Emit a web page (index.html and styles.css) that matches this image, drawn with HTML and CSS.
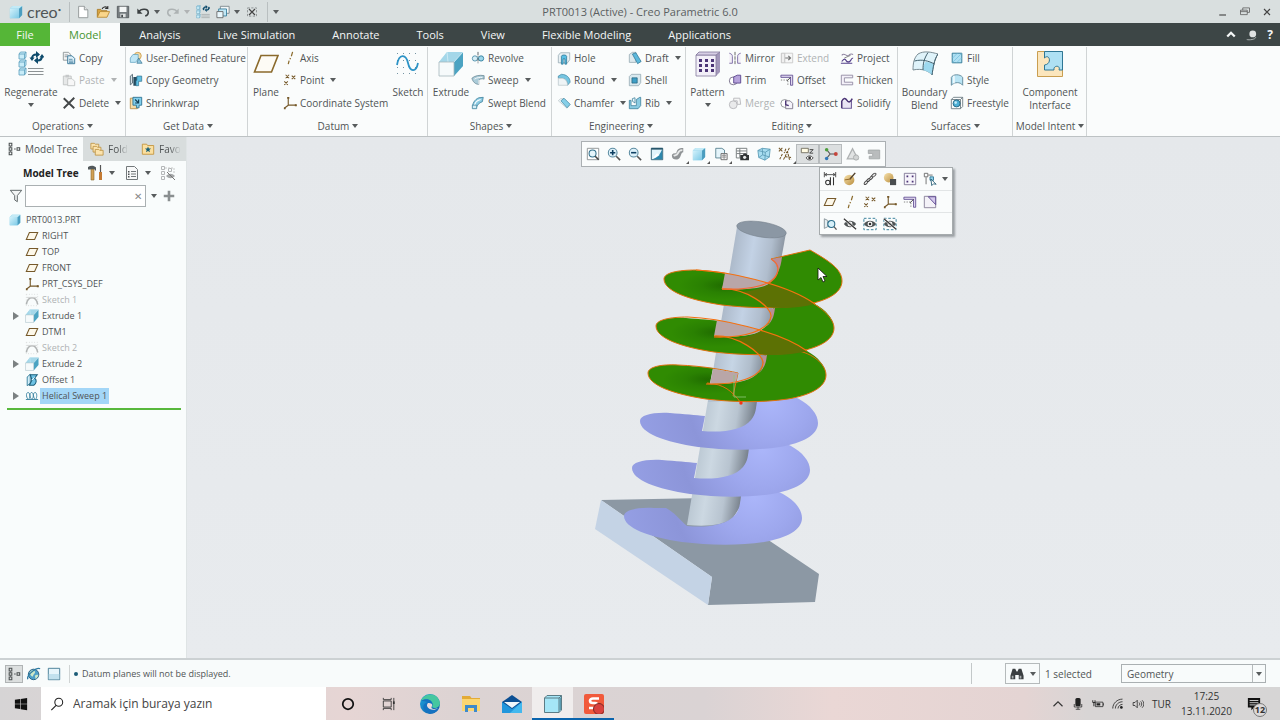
FILE: index.html
```
<!DOCTYPE html>
<html lang="en">
<head>
    <meta charset="UTF-8">
    <meta name="viewport" content="width=device-width, initial-scale=1.0">
    <title>PRT0013 (Active) - Creo Parametric 6.0</title>
    <link rel="stylesheet" href="styles.css">
</head>
<body>
    <!-- Icon sprite -->
    <svg class="sprite" aria-hidden="true">
        <defs>
            <linearGradient id="g-cube" x1="0" y1="0" x2="1" y2="1"><stop offset="0" stop-color="#d4f2fb"/><stop offset="1" stop-color="#7cc9e6"/></linearGradient>
            <linearGradient id="g-edge" x1="0" y1="0" x2="1" y2="1"><stop offset="0" stop-color="#1fa5e0"/><stop offset="1" stop-color="#0c59a4"/></linearGradient>
            <linearGradient id="g-gold" x1="0" y1="0" x2="1" y2="1"><stop offset="0" stop-color="#f8e3ae"/><stop offset="1" stop-color="#b98e3f"/></linearGradient>
        </defs>
        <symbol id="cube" viewBox="0 0 16 16"><path d="M1 4 4 1h11v10.500L11.500 15H1z" fill="#7fcbe8"/><path d="M1 4h10.500v11H1z" fill="url(#g-cube)"/><path d="M11.500 4 15 1v10.500L11.500 15z" fill="#4b9dbf"/><path d="M1 4 4 1h11l-3.500 3z" fill="#c3eaf6"/></symbol>
        <symbol id="cube-app" viewBox="0 0 20 20"><path d="M1.500 4 4 1.500h14.500V16L16 18.500H1.500z" fill="#a5e6f7" stroke="#5b7c86"/><path d="M1.500 4H16v14.500M16 4l2.500-2.500" fill="none" stroke="#5b7c86"/><path d="M16.500 4.500 18 3v12.500l-1.500 1.500z" fill="#5b9bb0"/></symbol>
        <symbol id="new" viewBox="0 0 16 16"><path d="M3 1.500h6.500l4 4v9H3z" fill="#fff" stroke="#8d9294"/><path d="M9.500 1.500v4h4" fill="#e3e6e6" stroke="#8d9294"/></symbol>
        <symbol id="open" viewBox="0 0 16 16"><path d="M1.500 14V5h4l1 1.500h6V8" fill="#d9a441" stroke="#a97a26"/><path d="m1.500 14 3-6.500h11L12.500 14z" fill="#f9d58a" stroke="#b98a34"/><path d="M7 4.500C8 2 11 1.500 13 3m.5-2v3h-3" fill="none" stroke="#333" stroke-width="1.200"/></symbol>
        <symbol id="save" viewBox="0 0 16 16"><path d="M1.500 1.500h13v13h-13z" fill="#777d80" stroke="#54595b"/><path d="M4 2h8v6H4z" fill="#f4f6f6"/><path d="M5 10h6v4H5z" fill="#dfe2e2"/><path d="M6 11h2v3H6z" fill="#454a4c"/></symbol>
        <symbol id="undo" viewBox="0 0 16 16"><path d="M3 8C6 3.500 14 4 14 8.500c0 2-1.500 3.500-3.500 4" fill="none" stroke="currentColor" stroke-width="1.800"/><path d="M1.500 4v6h6z" fill="currentColor"/></symbol>
        <symbol id="redo" viewBox="0 0 16 16"><path d="M13 8C10 3.500 2 4 2 8.500c0 2 1.500 3.500 3.500 4" fill="none" stroke="currentColor" stroke-width="1.800"/><path d="M14.500 4v6h-6z" fill="currentColor"/></symbol>
        <symbol id="regen" viewBox="0 0 26 26"><g fill="#c8ecf8" stroke="#5b9fbd" stroke-width=".8"><path d="M1 3 2.500 1H8v5L6.500 8H1zM1 11l1.500-2H8v5l-1.500 2H1zM1 19l1.500-2H8v5l-1.500 2H1z"/><path d="M1 3h5.500v5M1 11h5.500v5M1 19h5.500v5M6.500 3 8 1M6.500 11 8 9M6.500 19 8 17" fill="none"/></g><path d="M10 17.500h15.500M10 20.500h15.500M10 23.500h15.500" stroke="#8c9294"/><path d="M14 8c0-3 1-4.500 4.500-4.500M24 5c0 3-1 4.500-4.500 4.500" fill="none" stroke="#0e4b6c" stroke-width="2.200"/><path d="m18 0 4 3.500L18 7zM20 6l-4 3.500 4 3.500zM11.500 6.500h5L14 10zM21.500 6.500 24 3l2.500 3.500z" fill="#0e4b6c"/></symbol>
        <symbol id="windows" viewBox="0 0 16 16"><path d="M5 1.500h10v8H5z" fill="#f4f7f7" stroke="#7a868b"/><path d="M3 4.500h9v8H3z" fill="#c0e7f5" stroke="#377f9d"/><path d="M1 7.500h7v7H1z" fill="#e9f7fc" stroke="#666"/></symbol>
        <symbol id="closewin" viewBox="0 0 16 16"><path d="M2 2.500h12v11H2z" fill="none" stroke="#7a7f80" stroke-dasharray="3 2"/><path d="m4 4 8 8m0-8-8 8" stroke="#444" stroke-width="1.600"/></symbol>
        <symbol id="copy" viewBox="0 0 16 16"><path d="M1.500 1.500h6l2 2v7h-8z" fill="#f2f4f5" stroke="#8b9396"/><path d="M3 4.500h4M3 6.500h3" stroke="#8b9396"/><path d="M6.500 5.500h5l3 3v6h-8z" fill="#dff1fa" stroke="#2d6f91"/><path d="M8 9.500h4M8 11.500h5M8 13h5" stroke="#2d6f91" stroke-width=".8"/></symbol>
        <symbol id="paste" viewBox="0 0 16 16"><path d="M1.500 3.500h9v10h-9z" fill="#e2e4e4" stroke="#b0b3b4"/><path d="M4 2h4v3H4z" fill="#b9bcbd"/><path d="M6.500 6.500h5l3 3v5h-8z" fill="#f7f7f7" stroke="#b0b3b4"/></symbol>
        <symbol id="delete" viewBox="0 0 16 16"><path d="m2 2.500 12 11.500M14 2 2 14" fill="none" stroke="#434748" stroke-width="2.200"/></symbol>
        <symbol id="udf" viewBox="0 0 16 16"><circle cx="10" cy="5.500" r="4" fill="#f6dca6" stroke="#c99d4b"/><path d="M4.500 4 1.500 8v5h6l3-4V4z" fill="#bfe6f5" stroke="#5b9fbd" stroke-width=".8"/><path d="m9 14 2-6 4 6z" fill="#8ec6de" stroke="#3b7895" stroke-width=".8"/></symbol>
        <symbol id="copygeo" viewBox="0 0 16 16"><path d="M1.500 3.500 4 1.500v10l-2.500 2z" fill="#d5e2e8" stroke="#51646e"/><path d="M5 4.500h6v5H8v5H5z" fill="#264b5e"/><path d="M9 3.500h5.500v6H11v5H8v-6h1z" fill="#5fc0e3" stroke="#30718e" stroke-width=".8"/></symbol>
        <symbol id="shrink" viewBox="0 0 16 16"><path d="M1.500 2.500h8v12h-8z" fill="#f4dca9" stroke="#b99048"/><path d="M4.500 1.500h10v9h-3v3h-3v-3h-4z" fill="#82cfec" stroke="#2c7191"/><path d="m7 4 4 4m0-4v4H7" fill="none" stroke="#123f56" stroke-width="1.300"/></symbol>
        <symbol id="plane" viewBox="0 0 26 26"><path d="M8 4.500h17L18.500 21H1.500z" fill="#fdfbf5" stroke="#8a6a2c" stroke-width="1.600"/></symbol>
        <symbol id="plane-s" viewBox="0 0 16 16"><path d="M5 4h9.500L11 12H1.500z" fill="#fdf8ea" stroke="#76592a" stroke-width="1.200"/></symbol>
        <symbol id="axis" viewBox="0 0 16 16"><path d="M11 1 9.500 6M8.500 8 8 9.500M7 11l-1 4" stroke="#8a6a2c" stroke-width="1.400"/></symbol>
        <symbol id="point" viewBox="0 0 16 16"><path d="m3 2 4 4m0-4L3 6m7-3 4 4m0-4-4 4M1.500 9.500l4 4m0-4-4 4" stroke="#76592a" stroke-width="1.200"/></symbol>
        <symbol id="csys" viewBox="0 0 16 16"><path d="M6 1.500v9h9M6 10.500 1.500 14" fill="none" stroke="#76592a" stroke-width="1.300"/><path d="M4.800 1h2.400v2H4.800zM13.500 9.400H15.800v2.200h-2.300zM1 13h2v2H1z" fill="#76592a"/></symbol>
        <symbol id="sketch" viewBox="0 0 26 26"><path d="M2 2.500h24M2 9.500h24M2 16.500h24M2 22.500h24" stroke="#7594a3" stroke-dasharray="1 5"/><path d="M2 14C4 2 11 3 13 12s8 10 10 0" fill="none" stroke="#2c93c6" stroke-width="1.800"/></symbol>
        <symbol id="extrude" viewBox="0 0 26 26"><path d="M1 11 9 1h16v14l-9 10H1z" fill="#c9e9f4"/><path d="M9 1h16l-9 10H1z" fill="#a4d7e9"/><path d="M25 1v14l-9 10V11z" fill="#4ba3c2"/><path d="m9 1 1 10M10 15h6M16 11l9-10" stroke="#d6eef6" stroke-width=".8"/><path d="M1 11h15v14H1z" fill="#f6fafb" stroke="#a5b6bd" stroke-width=".8"/></symbol>
        <symbol id="revolve" viewBox="0 0 16 16"><circle cx="4.500" cy="8.500" r="3" fill="#d7eef6" stroke="#4c8ea9"/><circle cx="11.500" cy="8.500" r="3" fill="#9dd6ea" stroke="#2f7d9c"/><path d="M8 1v14" stroke="#4a565b" stroke-dasharray="4 1 1 1"/></symbol>
        <symbol id="sweep" viewBox="0 0 16 16"><path d="M1 6c3-3 9-4 14-3v4c-3-1-5 0-6 1v5C5 13 2 10 1 6z" fill="#aacbd8" stroke="#61808d" stroke-width=".8"/><path d="M4 7c3-2 6-2 9-2M9 8v5" fill="none" stroke="#fff"/></symbol>
        <symbol id="swept" viewBox="0 0 16 16"><path d="M2 14C1 9 4 4 9 2l5-.500-1 5C9 8 7 10 6 14z" fill="#8ccbe2" stroke="#3c7f9a" stroke-width=".9"/><path d="M4 12c0-4 3-7 7-8" fill="none" stroke="#fff" stroke-width="1.200"/><path d="M1.500 10.500h5v4h-5z" fill="#d5eef7" stroke="#3c7f9a" stroke-width=".8"/></symbol>
        <symbol id="hole" viewBox="0 0 16 16"><path d="M1.500 5 4 2h10.500v8L12 13.500H1.500z" fill="#e9f1f4" stroke="#8ba0aa" stroke-width=".8"/><path d="M5 6c0-2 6-2 6 0v9H9V9H7v6H5z" fill="#58bfe4" stroke="#256d8c" stroke-width=".8"/></symbol>
        <symbol id="round" viewBox="0 0 16 16"><path d="M1.500 3.500 5 1.500c6 0 10 4 10 9L12 14c0-5-3-8-7-8H1.500z" fill="#76c5e1" stroke="#3f87a4" stroke-width=".8"/><path d="M1.500 6H5c4 0 7 3 7 8H1.500z" fill="#eef4f6" stroke="#b8c4c9" stroke-width=".8"/></symbol>
        <symbol id="chamfer" viewBox="0 0 16 16"><path d="M1.500 5.500 4 3h4l7 7-3.500 4z" fill="#eef4f6" stroke="#b8c4c9" stroke-width=".8"/><path d="m4.500 5.500 3.500-3 7 7-3.500 4z" fill="#86cfe8" stroke="#3f87a4" stroke-width=".8"/></symbol>
        <symbol id="draft" viewBox="0 0 16 16"><path d="M1.500 4 5 1.500h4V13H1.500z" fill="#dce9ee" stroke="#8ba0aa" stroke-width=".8"/><path d="M5 3.500 9 2l6 10-4 2.500z" fill="#5bb8dc" stroke="#2a708f" stroke-width=".8"/></symbol>
        <symbol id="shell" viewBox="0 0 16 16"><path d="M1.500 4 4 1.500h10.500V11L12 14.500H1.500z" fill="#d9e9ef" stroke="#8ba0aa" stroke-width=".8"/><path d="M4.500 5.500h6v6h-6z" fill="#3f9fc6" stroke="#22607a" stroke-width=".8"/></symbol>
        <symbol id="rib" viewBox="0 0 16 16"><path d="M1.500 5h2v6h6V4l4-2.500h1V11l-3 3.500h-10z" fill="#8acbe2" stroke="#2f7592" stroke-width=".8"/><path d="M5 6V3l3-1v6z" fill="#e8f6fb" stroke="#2f7592" stroke-width=".8"/></symbol>
        <symbol id="pattern" viewBox="0 0 26 26"><path d="M1 4 4 1h21v20l-4 4H1z" fill="#a297ba"/><path d="M1 4h20v21H1z" fill="#f2eff8" stroke="#83789c" stroke-width=".8"/><path d="M1 4 4 1h21l-4 3z" fill="#d6cee4" stroke="#83789c" stroke-width=".8"/><path d="M4 8h3v3H4zM10 8h3v3h-3zM16 8h3v3h-3zM4 13h3v3H4zM10 13h3v3h-3zM16 13h3v3h-3zM4 18h3v3H4zM10 18h3v3h-3zM16 18h3v3h-3z" fill="#4c3577"/></symbol>
        <symbol id="mirror" viewBox="0 0 16 16"><path d="M1.500 2.500c3 1 3.500 2 3.500 4V14H1.500M14.500 2.500C11.500 3.500 11 4.500 11 6.500V14h3.500" fill="#f3f0f8" stroke="#7463a0"/><path d="M8 1v14" stroke="#555" stroke-dasharray="4 1"/></symbol>
        <symbol id="trim" viewBox="0 0 16 16"><circle cx="6" cy="9" r="4.500" fill="#fff" stroke="#746b86"/><path d="M6.500 4.500v7h8v-9h-4z" fill="#b6a3db" stroke="#56418a"/></symbol>
        <symbol id="merge" viewBox="0 0 16 16"><circle cx="6" cy="10" r="4.500" fill="#e6e6e8" stroke="#a3a3a8"/><path d="M6.500 2.500h7l1 7h-4v-4h-4z" fill="#f5f5f5" stroke="#a3a3a8"/></symbol>
        <symbol id="extend" viewBox="0 0 16 16"><path d="M1.500 2.500h4v11h-4z" fill="#ededed" stroke="#b0b0b0"/><path d="M5.500 2.500h9v11h-9z" fill="#f6f6f6" stroke="#bbb"/><path d="M6 8h6M9.500 5.500 12 8l-2.500 2.500" fill="none" stroke="#555" stroke-width="1.400"/></symbol>
        <symbol id="offset" viewBox="0 0 16 16"><path d="M1 2.500h13.500V14H12V5H1z" fill="#e0d8f0" stroke="#56418a" stroke-width=".9"/><path d="M1 8h8v7" fill="none" stroke="#777" stroke-dasharray="1.500 1.500"/><path d="m8 9 4-4" stroke="#333"/></symbol>
        <symbol id="intersect" viewBox="0 0 16 16"><circle cx="5.500" cy="8.500" r="4.500" fill="#fff" stroke="#8b8f92"/><path d="M6.500 5.500h5l3 3v6h-8z" fill="#f5f3fa" stroke="#7b7687"/><path d="M6.500 5v5l3.500 1" fill="none" stroke="#4c3577" stroke-width="1.500"/></symbol>
        <symbol id="project" viewBox="0 0 16 16"><path d="M2 5c3-4 5 2 8 0 2-2 3-2 5-1" fill="none" stroke="#9187a3" stroke-width="1.200"/><path d="M2 12c3-4 4-3 5-1s4 2 5 0 2-3 3-3M1 14h13" fill="none" stroke="#56418a" stroke-width="1.300"/><path d="M12 5 5 8" stroke="#777"/></symbol>
        <symbol id="thicken" viewBox="0 0 16 16"><path d="M14.500 2.500h-13v11h13v-3H5v-5h9.500z" fill="#f4f1f9" stroke="#8f87a0"/></symbol>
        <symbol id="solidify" viewBox="0 0 16 16"><path d="M3 7c2-3 4-2 5 0s3 1 4 0v6H3z" fill="#e9e3f4"/><path d="M2 14h11V5" fill="none" stroke="#6e5b99" stroke-width="1.300"/><path d="M2 14V6c2-4 4-4 6-1s4 2 6-2" fill="none" stroke="#4c3577" stroke-width="1.800"/></symbol>
        <symbol id="boundary" viewBox="0 0 26 26"><path d="M6 3C12-.500 19 1 26 3c-4 6-5 14-6 21-3-4-10-7-19-5C1 12 2 7 6 3z" fill="#dff3fa" stroke="#7a8c94"/><path d="M13.500 11C18 11 20 12 22 13.500L20 24c-3-3-6-4-9-5 0-3 1-6 2.500-8z" fill="#9dd9ef"/><path d="M16 1.500C12 8 11 12 11 19M2.500 10c8-2 14 0 20 3M26 3c-4 6-5 14-6 21" fill="none" stroke="#44626f"/></symbol>
        <symbol id="fill" viewBox="0 0 16 16"><path d="M2.500 2.500h11v11h-11z" fill="#afe0f3" stroke="#26708f"/><path d="m3 8 5-5M3 13 13 3m-5 10 5-5" stroke="#7ec5e0"/></symbol>
        <symbol id="style" viewBox="0 0 16 16"><path d="M1.500 14V5c2-4 10-4 13 0v9c-3-4-9-4-13 0z" fill="#b9e4f4" stroke="#5b8496"/><path d="M4.500 12V3" stroke="#fff" stroke-width="1.500"/></symbol>
        <symbol id="freestyle" viewBox="0 0 16 16"><path d="M1.500 4 4 1.500h10.500V12L12 14.500H1.500zM1.500 4H12v10.500M12 4l2.500-2.500" fill="none" stroke="#6b7a81"/><circle cx="7.500" cy="8.500" r="4" fill="#4fb0d6" stroke="#1e627f"/><circle cx="6.500" cy="7.500" r="1.500" fill="#c4ecf9"/></symbol>
        <symbol id="component" viewBox="0 0 26 26"><path d="M.5.500h25v25H.5z" fill="#fbe6bd" stroke="#c99e50"/><path d="M7.500.500h18V19H22c2-5-6-5-5 0H7.500v-5c8-1 5-12 0-7z" fill="#aee0f3" stroke="#2f7795"/></symbol>
        <symbol id="tree" viewBox="0 0 16 16"><path d="M2.500 1.500h3v3h-3zM2.500 6.500h3v3h-3zM2.500 11.500h3v3h-3zM11.500 6.500h3v3h-3z" fill="none" stroke="#4a4f50" stroke-width="1.200"/><path d="M8 8h2M4 5v1M4 10v1" stroke="#4a4f50"/></symbol>
        <symbol id="folders" viewBox="0 0 16 16"><g fill="#fbe3ae" stroke="#b88d3c" stroke-width=".9"><path d="M1 1.500h4l1 1h4V8H1z"/><path d="M3.500 5h4l1 1h4v5.500h-9z"/><path d="M6 8.500h4l1 1h4V15H6z"/></g></symbol>
        <symbol id="fav" viewBox="0 0 16 16"><path d="M1.500 2.500h5l1 1.500h7v10h-13z" fill="#fbdf9f" stroke="#c2953e"/><path d="m8 5 1 2.500h2.500l-2 1.700.8 2.500L8 10.200l-2.300 1.500.8-2.500-2-1.700H7z" fill="#155f77"/></symbol>
        <symbol id="tools" viewBox="0 0 16 16"><path d="M0 2c3-2 6-1.500 8 .500v3H7V4.500H0z" fill="#51585b"/><path d="M3 4.500h3V15H3z" fill="#d1a054" stroke="#8a6a2c" stroke-width=".6"/><path d="M12.500 0v8" stroke="#555" stroke-width="1.200"/><path d="M11 7h3v8h-3z" fill="#c47b34"/></symbol>
        <symbol id="list" viewBox="0 0 16 16"><path d="M2.500 1.500h8l3 3v10h-11z" fill="#f8f9f9" stroke="#73797b"/><path d="M7 6.500h5M7 9h5M7 11.500h5" stroke="#73797b"/><path d="M4 6h1.500v1.500H4zM4 8.500h1.500V10H4zM4 11h1.500v1.500H4z" fill="#4b5153"/></symbol>
        <symbol id="treehide" viewBox="0 0 16 16"><path d="M1.500 1.500h3v3h-3zM1.500 6.500h3v3h-3zM1.500 11.500h3v3h-3zM8.500 3.500h3v3h-3z" fill="none" stroke="#b4b7b8"/><path d="M5 3h9v5" fill="none" stroke="#c6c8c8" stroke-dasharray="2 1"/><path d="M6 11c3-3 6-3 9 0-3 3-6 3-9 0z" fill="#a4a7a8"/><path d="m7 7 8 8" stroke="#777"/></symbol>
        <symbol id="funnel" viewBox="0 0 16 16"><path d="M1.500 1.500h13l-5 6v7l-3-2v-5z" fill="#f4f6f6" stroke="#5e6566" stroke-width="1.100"/></symbol>
        <symbol id="plus" viewBox="0 0 16 16"><path d="M6.500 2h3v4.500H14v3H9.500V14h-3V9.500H2v-3h4.500z" fill="#8a8f90"/></symbol>
        <symbol id="sketch-off" viewBox="0 0 16 16"><path d="M1.500 1.500h13v13h-13z" fill="none" stroke="#cdcfcf" stroke-dasharray="1 2"/><path d="M1.500 13c1-5 3.500-7.500 6.500-7.500s5.500 2.500 6.500 7.500" fill="none" stroke="#9fa2a2" stroke-width="1.800"/><path d="M2 5h12" stroke="#c3c5c5"/></symbol>
        <symbol id="offset-s" viewBox="0 0 16 16"><path d="M2.500 4.500 6 1.500v10l-3.500 3z" fill="#d4eef8" stroke="#2d7897"/><path d="M6 2h8l-3 4c3 2 2 6-1 8H5l3-6z" fill="#6fc3e4" stroke="#1c5f7b" stroke-width="1.200"/><path d="m8 8 3-3" stroke="#fff"/></symbol>
        <symbol id="helix" viewBox="0 0 16 16"><path d="M1 12h3C1 10 1 4 3.500 4S6 10 4 12h4C5 10 5 4 7.500 4S10 10 8 12h4C9 10 9 4 11.500 4S14 10 12 12h3" fill="none" stroke="#317d9c"/></symbol>
        <symbol id="zoomfit" viewBox="0 0 16 16"><path d="M1.500 1.500h13v13h-13z" fill="#fff" stroke="#888e90"/><circle cx="7.500" cy="7.500" r="4" fill="#e5f5fb" stroke="#33718c" stroke-width="1.200"/><path d="m10.500 10.500 4 4" stroke="#444" stroke-width="1.800"/></symbol>
        <symbol id="zoomin" viewBox="0 0 16 16"><circle cx="6.500" cy="6.500" r="5" fill="#ddf1fa" stroke="#5b8ba1" stroke-width="1.200"/><path d="M6.500 3.500v6m-3-3h6" stroke="#0d3f63" stroke-width="1.800"/><path d="m10.500 10.500 4.500 4.500" stroke="#555" stroke-width="1.800"/></symbol>
        <symbol id="zoomout" viewBox="0 0 16 16"><circle cx="6.500" cy="6.500" r="5" fill="#ddf1fa" stroke="#5b8ba1" stroke-width="1.200"/><path d="M3.500 6.500h6" stroke="#0d3f63" stroke-width="1.800"/><path d="m10.500 10.500 4.500 4.500" stroke="#555" stroke-width="1.800"/></symbol>
        <symbol id="repaint" viewBox="0 0 16 16"><path d="M1.500 1.500h13v13h-13z" fill="#e1f4fb" stroke="#27566b"/><path d="M14 2v12H2C8 13 12 8 14 2z" fill="#2d87ac"/><path d="m2 14 6-7 3 2z" fill="#fff"/><path d="M1.500 2h13" stroke="#27566b" stroke-width="2"/></symbol>
        <symbol id="render" viewBox="0 0 16 16"><path d="M1 10c0-3 3-3 5-3 1-4 2-6 8-6v5c-3 0-2 6-6 8-3 1-7 0-7-4z" fill="#909496"/><path d="M3 10c2-1 4 0 5-3s2-3.500 5-3.500" fill="none" stroke="#e8eaea" stroke-width="2"/></symbol>
        <symbol id="view" viewBox="0 0 16 16"><path d="M2 1.500h7l3 2v9H2z" fill="#e5f5fb" stroke="#56808f"/><path d="M8 7.500h7v7H8z" fill="#f6f6f6" stroke="#666"/><path d="M9 9.500h5M9 11.500h5M11.500 8v6" stroke="#888"/></symbol>
        <symbol id="camera" viewBox="0 0 16 16"><path d="M1.500 1.500h12v11h-12zM2 4.500h11M2 7.500h11M5.500 2v10" fill="#fff" stroke="#6c7274"/><path d="M6 9h3l1-1.500h3L14 9h2v6H6z" fill="#303435"/><circle cx="11" cy="11.800" r="1.800" fill="#e7eaea"/></symbol>
        <symbol id="persp" viewBox="0 0 16 16"><path d="m1 4 5-2.500 9 1-1 9-5 3.500-7-3z" fill="#a9def1" stroke="#5c9cb6"/><path d="m1 4 8.500 2L15 2.500M9.500 6 9 15M6 1.500 6.500 9 2 12m4.500-3 8 2.500" fill="none" stroke="#5c9cb6"/></symbol>
        <symbol id="datum" viewBox="0 0 16 16"><path d="m1 1 4 4m0-4L1 5" stroke="#76592a" stroke-width="1.200"/><path d="M13 1 6 15M5 8l-3 6M9 6h2l2 8h2M8 11l7 1M9 2l-2 5" stroke="#76592a" stroke-width="1.200" fill="none" stroke-dasharray="3 1"/></symbol>
        <symbol id="annot" viewBox="0 0 16 16"><path d="M1.500 1.500h8v5h-8z" fill="#fffbe4" stroke="#6e6b5c"/><path d="M11 3h4l-4 4h4" fill="none" stroke="#333"/><path d="M7 12.500c2-3 6-3 8 0-2 3-6 3-8 0z" fill="#fff" stroke="#333"/><circle cx="11" cy="12.500" r="1.600" fill="#333"/></symbol>
        <symbol id="spin" viewBox="0 0 16 16"><path d="M3 3l4 5-4 5m4-5h6" fill="none" stroke="#555" stroke-width="1.200"/><circle cx="3" cy="3" r="2" fill="#4c9e3c"/><circle cx="3" cy="13" r="2" fill="#3277b8"/><circle cx="13.500" cy="8" r="2.200" fill="#c5453b"/></symbol>
        <symbol id="warn" viewBox="0 0 16 16"><path d="m7.500 2 6 11.500h-12z" fill="#e1e3e3" stroke="#aeb1b2" stroke-width="1.500"/><circle cx="11.500" cy="12" r="3" fill="#d2d4d4" stroke="#a8abab"/></symbol>
        <symbol id="exit" viewBox="0 0 16 16"><path d="M1.500 3.500h13v10h-12v-3h4v-3h-5z" fill="#b9bcbd" stroke="#a4a8a9"/></symbol>
        <symbol id="dim" viewBox="0 0 16 16"><path d="M1.500 0v6M14.500 0v6M2 3h12M4.500 1.500 2 3l2.500 1.500M11.500 1.500 14 3l-2.500 1.500" fill="none" stroke="#444"/><path d="M8.500 6v9M12 6v9" stroke="#333" stroke-width="1.200"/><circle cx="5.500" cy="12" r="2.500" fill="none" stroke="#333" stroke-width="1.200"/></symbol>
        <symbol id="paint" viewBox="0 0 16 16"><circle cx="7" cy="9" r="6" fill="url(#g-gold)"/><path d="m14 1-6 7" fill="none" stroke="#51412b" stroke-width="1.600"/><path d="m2 9 7-1" stroke="#8a5f22"/></symbol>
        <symbol id="chain" viewBox="0 0 16 16"><g fill="#eee" stroke="#444" stroke-width="1.100"><ellipse cx="3.500" cy="12" rx="2.800" ry="1.400" transform="rotate(-50 3.500 12)"/><ellipse cx="6.500" cy="9" rx="2.500" ry="1.200" transform="rotate(-35 6.500 9)"/><ellipse cx="9.500" cy="6.500" rx="2.500" ry="1.200" transform="rotate(-50 9.500 6.500)"/><ellipse cx="12.500" cy="3.500" rx="2.800" ry="1.400" transform="rotate(-40 12.500 3.500)"/></g></symbol>
        <symbol id="mat" viewBox="0 0 16 16"><circle cx="6.500" cy="6.500" r="5.500" fill="url(#g-gold)"/><path d="M8 8h7v7H8z" fill="#4a4e50"/></symbol>
        <symbol id="pattern-s" viewBox="0 0 16 16"><path d="M1.500 1.500h13v13h-13z" fill="#f6f4fb" stroke="#7e7593"/><path d="M4 4h2v2H4zM10 4h2v2h-2zM4 10h2v2H4zM10 10h2v2h-2z" fill="#4c3577"/></symbol>
        <symbol id="select" viewBox="0 0 16 16"><path d="M1.500 1.500h4v4h-4zM3.500 6v8M6 3.500h5" fill="none" stroke="#666"/><path d="M8 5.500h4v4H8z" fill="#8fd0ea" stroke="#2f7592"/><path d="m9 8 6 6-3-.500-2 2z" fill="#fff" stroke="#245b74"/></symbol>
        <symbol id="trim-s" viewBox="0 0 16 16"><path d="M1.500 1.500h13v13h-13z" fill="#f4f2f8" stroke="#837b95"/><path d="M6 2h8.500v9z" fill="#d4c8ec" stroke="#56418a"/></symbol>
        <symbol id="selzoom" viewBox="0 0 16 16"><path d="M1.500 2v11l4-2V4z" fill="#e5eef1" stroke="#839096"/><circle cx="9.500" cy="8" r="4" fill="#d7f0f9" stroke="#2c6f8d" stroke-width="1.200"/><path d="m12.500 11 3 3.500" stroke="#555" stroke-width="1.500"/></symbol>
        <symbol id="eye" viewBox="0 0 16 16"><path d="M1 8c4-5 10-5 14 0-4 5-10 5-14 0z" fill="#4f5455"/><circle cx="8" cy="8" r="2.800" fill="#fff"/><circle cx="8" cy="8" r="1.500" fill="#333"/></symbol>
        <symbol id="eye-off" viewBox="0 0 16 16"><use href="#eye"/><path d="m1 2 14 12" stroke="#fff" stroke-width="2.600"/><path d="m1 2 14 12" stroke="#333" stroke-width="1.400"/></symbol>
        <symbol id="eye-box" viewBox="0 0 16 16"><path d="M1 1.500h14v13H1z" fill="none" stroke="#237391" stroke-dasharray="3 2"/><use href="#eye"/></symbol>
        <symbol id="eye-off-box" viewBox="0 0 16 16"><path d="M1 1.500h14v13H1z" fill="none" stroke="#237391" stroke-dasharray="3 2"/><use href="#eye-off"/></symbol>
        <symbol id="globe" viewBox="0 0 16 16"><circle cx="7.500" cy="8.500" r="6" fill="#4f9fc8" stroke="#22597a"/><path d="M3 6c2-3 5-3 6-1s-2 3-2 5-3 1-4-4zM9 10c2-2 4-1 4 0l-3 4z" fill="#cfe9c8"/><path d="M1 14C-1 9 11 0 15 2" fill="none" stroke="#2f7ba2" stroke-width="1.500"/></symbol>
        <symbol id="screen" viewBox="0 0 16 16"><path d="M1.500 1.500h13v13h-13z" fill="#e7f5fb" stroke="#3c7590"/><path d="M2 8h12v6H2z" fill="#c2e1ee"/></symbol>
        <symbol id="binoc" viewBox="0 0 16 16"><path d="M3 2h3l1.500 3h1L10 2h3l2.500 8v4H10V9H6v5H.500v-4z" fill="#3b3f41"/><path d="M2 10h2v3H2zM11 10h2v3h-2z" fill="#a9adaf"/></symbol>
        <symbol id="win" viewBox="0 0 16 16"><path d="m1 3.200 6-.9v5.400H1zM7.700 2.200 15 1v6.700H7.700zM1 8.400h6v5.400l-6-.9zM7.700 8.400H15V15l-7.300-1z" fill="#111"/></symbol>
        <symbol id="search" viewBox="0 0 16 16"><circle cx="10" cy="6" r="4.500" fill="none" stroke="#222" stroke-width="1.200"/><path d="m7 9.500-5.500 5.500" stroke="#222" stroke-width="1.300"/></symbol>
        <symbol id="cortana" viewBox="0 0 16 16"><circle cx="8" cy="8" r="6" fill="none" stroke="#111" stroke-width="2"/></symbol>
        <symbol id="taskview" viewBox="0 0 16 16"><path d="M1.500 4.500h9v7h-9zM1.500 1v2h9V1M1.500 15v-2h9v2M13.500 1v14" fill="none" stroke="#333"/><path d="M12.500 5h2v3h-2z" fill="#333"/></symbol>
        <symbol id="edge" viewBox="0 0 20 20"><circle cx="10" cy="10" r="10" fill="url(#g-edge)"/><path d="M1 7C3-1 18-3 20 9c0 5-6 6-8 4 3-5-4-10-11-6z" fill="#45c7a0"/><path d="M1 7c5-4 13-1 11 5-1 3 3 4 7 2-2 5-9 8-14 3-3-3-2-8 3-9-3-1-5-1-7-1z" fill="#1572c1"/><path d="M8 9c3 0 5 1 4 3-2 3 2 4 6 2-3 3-10 2-11-2 0-1 0-2 1-3z" fill="#eadcdd"/></symbol>
        <symbol id="explorer" viewBox="0 0 20 20"><path d="M1 2h8l1.500 2H19v13H1z" fill="#e3ab36"/><path d="M1 5h18v12H1z" fill="#fbd671"/><path d="M4 18v-7h12v7h-3v-4H7v4z" fill="#3d8acb"/></symbol>
        <symbol id="mail" viewBox="0 0 20 20"><path d="m0 8 10-7 10 7v11H0z" fill="#0b4f93"/><path d="M2 8h16l-8 6z" fill="#eef7fc"/><path d="m0 8 10 7 10-7v11H0z" fill="#2196dc"/><path d="M20 8v11H8z" fill="#43b8ee"/></symbol>
        <symbol id="snagit" viewBox="0 0 20 20"><rect width="20" height="20" rx="2" fill="#f15a3b"/><path d="M15 4.500H9C5 4.500 5 9 9 9h2c4 0 3 5 0 5H5" fill="none" stroke="#fff" stroke-width="2.600"/><circle cx="15" cy="15" r="5.500" fill="#d9423e" stroke="#7d2825"/></symbol>
        <symbol id="chev" viewBox="0 0 16 16"><path d="m2 11 6-6 6 6" fill="none" stroke="currentColor" stroke-width="1.500"/></symbol>
        <symbol id="chev-bold" viewBox="0 0 16 16"><path d="m3 10 5-5 5 5" fill="none" stroke="currentColor" stroke-width="3"/></symbol>
        <symbol id="mic" viewBox="0 0 16 16"><rect x="4.500" width="7" height="11" rx="2" fill="#222"/><path d="M3 8v4h10V8M8 12v3M5 15h6" fill="none" stroke="#222"/></symbol>
        <symbol id="battery" viewBox="0 0 16 16"><path d="M4.500 5.500h10v6h-10zM15.500 7v3" fill="none" stroke="#222"/><path d="M6 7h5v3H6z" fill="#222"/><path d="M1 3v3h3V3M2.500 6v5" fill="none" stroke="#222" stroke-width="1.200"/></symbol>
        <symbol id="wifi" viewBox="0 0 16 16"><path d="M1 14C1 7 7 1.500 14 1.500M4.500 14C4.500 9 9 5 14 5M8 14c0-3 3-5.500 6-5.500" fill="none" stroke="#333" stroke-width="1.200"/><circle cx="12.500" cy="12.500" r="1.800" fill="#222"/></symbol>
        <symbol id="sound" viewBox="0 0 16 16"><path d="M1.500 6v4h2.500l3 3V3L4 6zM9.500 6c1 1 1 3 0 4M11.500 4.500c2 2 2 5 0 7M13.500 3c3 3 3 7 0 10" fill="none" stroke="#222"/></symbol>
        <symbol id="notif" viewBox="0 0 16 16"><path d="M1 1h14v11H8l-3 3v-3H1z" fill="#111"/><path d="M3 4h10M3 6.500h10M3 9h7" stroke="#ddd"/></symbol>
        <symbol id="restore" viewBox="0 0 16 16"><path d="M5 5.500v-3h9v6h-3M2 5.500h9v6H2zM2 7.500h9" fill="none" stroke="#555"/></symbol>
        <symbol id="user" viewBox="0 0 16 16"><circle cx="9" cy="6.500" r="4.500" fill="#dfe2e2"/><path d="M1 14c3 1 12 0 12-3" fill="none" stroke="#b6bbbb" stroke-width="1.200"/></symbol>
    </svg>

    <header class="titlebar">
        <div class="title-left">
            <div class="brand"><svg class="icon"><use href="#cube"/></svg><span>creo<sup>•</sup></span></div>
            <div class="quick">
                <button aria-label="New"><svg class="icon"><use href="#new"/></svg></button>
                <button aria-label="Open"><svg class="icon"><use href="#open"/></svg></button>
                <button aria-label="Save"><svg class="icon"><use href="#save"/></svg></button>
                <button aria-label="Undo"><svg class="icon"><use href="#undo"/></svg><i class="caret"></i></button>
                <button class="off" aria-label="Redo"><svg class="icon"><use href="#redo"/></svg><i class="caret"></i></button>
                <button aria-label="Regenerate"><svg class="icon"><use href="#regen"/></svg></button>
                <button aria-label="Windows"><svg class="icon"><use href="#windows"/></svg><i class="caret"></i></button>
                <button aria-label="Close"><svg class="icon small"><use href="#closewin"/></svg></button>
            </div>
            <button class="customize" aria-label="Customize"><i class="caret"></i></button>
        </div>
        <h1>PRT0013 (Active) - Creo Parametric 6.0</h1>
        <div class="window-buttons">
            <button aria-label="Minimize"><svg class="icon small" viewBox="0 0 16 16"><path d="M3 12h9" stroke="#444" stroke-width="1.500"/></svg></button>
            <button aria-label="Restore"><svg class="icon small"><use href="#restore"/></svg></button>
            <button aria-label="Close"><svg class="icon small" viewBox="0 0 16 16"><path d="m4 4 8 8m0-8-8 8" stroke="#444" stroke-width="1.500"/></svg></button>
        </div>
    </header>

    <nav class="tabs">
        <button class="file">File</button>
        <button class="active">Model</button>
        <button>Analysis</button>
        <button>Live Simulation</button>
        <button>Annotate</button>
        <button>Tools</button>
        <button>View</button>
        <button>Flexible Modeling</button>
        <button>Applications</button>
        <div class="tab-tools">
            <svg class="icon small"><use href="#chev-bold"/></svg>
            <svg class="icon small"><use href="#user"/></svg>
            <b>?</b>
        </div>
    </nav>

    <section class="ribbon">
        <div class="group operations">
            <div class="tools">
                <button class="big"><svg><use href="#regen"/></svg>Regenerate<i class="caret"></i></button>
                <div class="col">
                    <button><svg class="icon"><use href="#copy"/></svg>Copy</button>
                    <button class="off"><svg class="icon"><use href="#paste"/></svg>Paste<i class="caret"></i></button>
                    <button><svg class="icon"><use href="#delete"/></svg>Delete<i class="caret"></i></button>
                </div>
            </div>
            <button class="label">Operations<i class="caret"></i></button>
        </div>
        <div class="group get-data">
            <div class="tools">
                <div class="col">
                    <button><svg class="icon"><use href="#udf"/></svg>User-Defined Feature</button>
                    <button><svg class="icon"><use href="#copygeo"/></svg>Copy Geometry</button>
                    <button><svg class="icon"><use href="#shrink"/></svg>Shrinkwrap</button>
                </div>
            </div>
            <button class="label">Get Data<i class="caret"></i></button>
        </div>
        <div class="group datum">
            <div class="tools">
                <button class="big"><svg><use href="#plane"/></svg>Plane</button>
                <div class="col">
                    <button><svg class="icon"><use href="#axis"/></svg>Axis</button>
                    <button><svg class="icon"><use href="#point"/></svg>Point<i class="caret"></i></button>
                    <button><svg class="icon"><use href="#csys"/></svg>Coordinate System</button>
                </div>
                <button class="big"><svg><use href="#sketch"/></svg>Sketch</button>
            </div>
            <button class="label">Datum<i class="caret"></i></button>
        </div>
        <div class="group shapes">
            <div class="tools">
                <button class="big"><svg><use href="#extrude"/></svg>Extrude</button>
                <div class="col">
                    <button><svg class="icon"><use href="#revolve"/></svg>Revolve</button>
                    <button><svg class="icon"><use href="#sweep"/></svg>Sweep<i class="caret"></i></button>
                    <button><svg class="icon"><use href="#swept"/></svg>Swept Blend</button>
                </div>
            </div>
            <button class="label">Shapes<i class="caret"></i></button>
        </div>
        <div class="group engineering">
            <div class="tools">
                <div class="col">
                    <button><svg class="icon"><use href="#hole"/></svg>Hole</button>
                    <button><svg class="icon"><use href="#round"/></svg>Round<i class="caret"></i></button>
                    <button><svg class="icon"><use href="#chamfer"/></svg>Chamfer<i class="caret"></i></button>
                </div>
                <div class="col">
                    <button><svg class="icon"><use href="#draft"/></svg>Draft<i class="caret"></i></button>
                    <button><svg class="icon"><use href="#shell"/></svg>Shell</button>
                    <button><svg class="icon"><use href="#rib"/></svg>Rib<i class="caret"></i></button>
                </div>
            </div>
            <button class="label">Engineering<i class="caret"></i></button>
        </div>
        <div class="group editing">
            <div class="tools">
                <button class="big"><svg><use href="#pattern"/></svg>Pattern<i class="caret"></i></button>
                <div class="col">
                    <button><svg class="icon"><use href="#mirror"/></svg>Mirror</button>
                    <button><svg class="icon"><use href="#trim"/></svg>Trim</button>
                    <button class="off"><svg class="icon"><use href="#merge"/></svg>Merge</button>
                </div>
                <div class="col">
                    <button class="off"><svg class="icon"><use href="#extend"/></svg>Extend</button>
                    <button><svg class="icon"><use href="#offset"/></svg>Offset</button>
                    <button><svg class="icon"><use href="#intersect"/></svg>Intersect</button>
                </div>
                <div class="col">
                    <button><svg class="icon"><use href="#project"/></svg>Project</button>
                    <button><svg class="icon"><use href="#thicken"/></svg>Thicken</button>
                    <button><svg class="icon"><use href="#solidify"/></svg>Solidify</button>
                </div>
            </div>
            <button class="label">Editing<i class="caret"></i></button>
        </div>
        <div class="group surfaces">
            <div class="tools">
                <button class="big"><svg><use href="#boundary"/></svg>Boundary<br>Blend</button>
                <div class="col">
                    <button><svg class="icon"><use href="#fill"/></svg>Fill</button>
                    <button><svg class="icon"><use href="#style"/></svg>Style</button>
                    <button><svg class="icon"><use href="#freestyle"/></svg>Freestyle</button>
                </div>
            </div>
            <button class="label">Surfaces<i class="caret"></i></button>
        </div>
        <div class="group intent">
            <div class="tools">
                <button class="big"><svg><use href="#component"/></svg>Component<br>Interface</button>
            </div>
            <button class="label">Model Intent<i class="caret"></i></button>
        </div>
    </section>

    <main class="workspace">
        <aside class="sidebar">
            <div class="side-tabs">
                <button class="active"><svg class="icon"><use href="#tree"/></svg>Model Tree</button>
                <button class="cut"><svg class="icon"><use href="#folders"/></svg><span>Fold</span></button>
                <button class="cut"><svg class="icon"><use href="#fav"/></svg><span>Favo</span></button>
            </div>
            <div class="side-head">
                <h2>Model Tree</h2>
                <button aria-label="Settings"><svg class="icon large"><use href="#tools"/></svg><i class="caret"></i></button>
                <button aria-label="Show"><svg class="icon large"><use href="#list"/></svg><i class="caret"></i></button>
                <button aria-label="Hide tree"><svg class="icon large"><use href="#treehide"/></svg></button>
            </div>
            <div class="side-search">
                <svg class="icon"><use href="#funnel"/></svg>
                <div class="search-box">
                    <input type="text" aria-label="Filter tree">
                    <button aria-label="Clear">✕</button>
                </div>
                <i class="caret"></i>
                <button aria-label="Add"><svg class="icon"><use href="#plus"/></svg></button>
            </div>
            <ul class="tree">
                <li class="root"><svg class="icon small"><use href="#cube"/></svg><span>PRT0013.PRT</span></li>
                <li><svg class="icon"><use href="#plane-s"/></svg><span>RIGHT</span></li>
                <li><svg class="icon"><use href="#plane-s"/></svg><span>TOP</span></li>
                <li><svg class="icon"><use href="#plane-s"/></svg><span>FRONT</span></li>
                <li><svg class="icon"><use href="#csys"/></svg><span>PRT_CSYS_DEF</span></li>
                <li class="off"><svg class="icon"><use href="#sketch-off"/></svg><span>Sketch 1</span></li>
                <li class="parent"><svg class="icon"><use href="#extrude"/></svg><span>Extrude 1</span></li>
                <li><svg class="icon"><use href="#plane-s"/></svg><span>DTM1</span></li>
                <li class="off"><svg class="icon"><use href="#sketch-off"/></svg><span>Sketch 2</span></li>
                <li class="parent"><svg class="icon"><use href="#extrude"/></svg><span>Extrude 2</span></li>
                <li><svg class="icon"><use href="#offset-s"/></svg><span>Offset 1</span></li>
                <li class="parent selected"><svg class="icon"><use href="#helix"/></svg><span>Helical Sweep 1</span></li>
            </ul>
        </aside>

        <section class="viewport">
            <svg class="model" viewBox="187 137 1093 521" role="img" aria-label="Helical sweep around a cylinder">
                <defs>
                    <linearGradient id="m-low" gradientUnits="userSpaceOnUse" x1="697" y1="450" x2="749" y2="458">
                        <stop offset="0" stop-color="#bac7d2"/><stop offset=".3" stop-color="#ccd8e2"/>
                        <stop offset=".65" stop-color="#b8c4d0"/><stop offset=".9" stop-color="#87919c"/><stop offset="1" stop-color="#727b85"/>
                    </linearGradient>
                    <linearGradient id="m-high" gradientUnits="userSpaceOnUse" x1="730" y1="260" x2="781" y2="268">
                        <stop offset="0" stop-color="#abb8c8"/><stop offset=".4" stop-color="#c3d2e5"/>
                        <stop offset=".75" stop-color="#b0bdcd"/><stop offset="1" stop-color="#8b95a1"/>
                    </linearGradient>
                    <linearGradient id="m-mid" gradientUnits="userSpaceOnUse" x1="712" y1="360" x2="763" y2="368">
                        <stop offset="0" stop-color="#b0bdcc"/><stop offset=".4" stop-color="#c6d5e5"/>
                        <stop offset=".75" stop-color="#b0bdcb"/><stop offset="1" stop-color="#858f9a"/>
                    </linearGradient>
                    <radialGradient id="m-blue" gradientUnits="userSpaceOnUse" cx="762" cy="448" r="135">
                        <stop offset="0" stop-color="#abb6fa"/><stop offset=".3" stop-color="#9da7ed"/>
                        <stop offset=".6" stop-color="#8c95d9"/><stop offset="1" stop-color="#959fe4"/>
                    </radialGradient>
                    <radialGradient id="m-green" gradientUnits="userSpaceOnUse" cx="692" cy="475" r="45" gradientTransform="translate(0 320) scale(1 .325)">
                        <stop offset="0" stop-color="#206c00"/><stop offset=".5" stop-color="#2a8102"/>
                        <stop offset="1" stop-color="#308b02"/>
                    </radialGradient>
                    <!-- one turn of the sweep, repeated up the shaft -->
                    <path id="blade" d="M632 468C632 462 645 459 662 460C676 461 688 462 697 463L694 478C715 480 735 477 743 467C748 461 748 455 749 448L752 436L775 438L791 446C802 452 810 461 810 470C810 482 795 490 772 494C745 498 715 497 690 494C657 489 632 480 632 468Z"/>
                    <!-- top turn, cut off straight at the end of the sweep -->
                    <path id="blade-end" d="M632 468C632 462 645 459 664 459C676 460 688 461 696 463L690 478C713 479 730 476 739 471C747 465 749 454 739 448L778 439C797 450 810 458 810 470C810 482 795 490 772 494C745 498 715 497 690 494C657 489 632 480 632 468Z"/>
                    <g id="hidden-turn">
                        <path d="M725 273C744 276 757 280 769 284C762 289 740 290 722 289Z" fill="#b9a6a8"/>
                        <path d="M769 284C786 289 801 296 815 304C800 308 782 309 766 307C760 300 752 295 741 292Q760 290 769 284Z" fill="#5c7104"/>
                        <path d="M770 309C773 316 770 323 766 327C774 320 774 314 775 308Z" fill="#b98d96"/>
                        <path d="M696 270C724 271 786 283 815 304M722 289C745 288 771 306 771 316C769 331 744 338 714 337" fill="none" stroke="#f5700f" stroke-width="1.200"/>
                    </g>
                </defs>
                <path d="M601 500 706 498 819 574 815 602 708 605 712 577Z" fill="#8c98a4"/>
                <path d="M601 500 712 577 708 605 595 529Z" fill="#c4d3e5"/>
                <path d="M708 400 687 525Q720 528 733 518L740 507 758 400Z" fill="url(#m-low)"/>
                <path d="M737 227 719 334Q760 338 770 320L786 233Z" fill="url(#m-high)"/>
                <path d="M719 334 708 402H757L770 330Z" fill="url(#m-mid)"/>
                <ellipse cx="761.500" cy="229.500" rx="25" ry="7.500" transform="rotate(9 761.500 229.500)" fill="#8b97a4" stroke="#77828e" stroke-width=".6"/>
                <g transform="translate(-8 48)">
                    <path d="M632 468C632 462 646 459 662 460L674 460C682 464 688 472 695 478C715 480 735 477 743 467C748 461 748 455 749 448L752 436 775 438 791 446C802 452 810 461 810 470C810 482 795 490 772 494C745 498 715 497 690 494C657 489 632 480 632 468Z" fill="url(#m-blue)"/>
                </g>
                <use href="#blade" fill="url(#m-blue)"/>
                <use href="#blade" fill="url(#m-blue)" transform="translate(8 -47)"/>
                <g fill="url(#m-green)" stroke="#e1700c" stroke-width="1">
                    <use href="#blade" transform="translate(16 -95)" stroke="none"/>
                    <path d="M648 373C648 367 661 364 678 365C704 366 724 370 738 373L733 396M648 373C648 385 673 394 706 399C731 402 761 403 788 399C811 395 826 387 826 375C826 366 816 355 799 351M707 383C724 384 732 391 741 403" fill="none"/>
                    <path d="M713 369 738 373 736 382 710 384Z" fill="#b9a6a8" stroke="none"/>
                    <use href="#blade" transform="translate(24 -142)" stroke="none"/>
                    <path d="M656 326C656 338 681 347 714 352C739 355 769 356 796 352C819 348 834 340 834 328C834 319 823 308 807 300M656 326C656 320 669 317 688 317" fill="none"/>
                    <use href="#blade-end" transform="translate(32 -189)"/>
                </g>
                <use href="#hidden-turn" transform="translate(-8 47)"/>
                <use href="#hidden-turn"/>
                <path d="M771 259C780 266 779 277 770 282C776 279 781 268 782 257Z" fill="#b98d96"/>
                <path d="M722 289C749 290 777 286 778 269Q778 263 771 259" fill="none" stroke="#f56a32" stroke-width="1.200"/>
                <path d="M734 375v22h12" fill="none" stroke="#8fc97c" stroke-width=".8"/>
                <circle cx="741" cy="403" r="1.700" fill="#f33618"/>
                <path d="M818 268v12l3-2.500 2 4.500 2-1-2-4.500h4z" fill="#fff" stroke="#111" stroke-width=".8"/>
            </svg>

            <div class="view-tools">
                <button aria-label="Refit"><svg class="icon"><use href="#zoomfit"/></svg></button>
                <button aria-label="Zoom in"><svg class="icon"><use href="#zoomin"/></svg></button>
                <button aria-label="Zoom out"><svg class="icon"><use href="#zoomout"/></svg></button>
                <button aria-label="Repaint"><svg class="icon"><use href="#repaint"/></svg></button>
                <button class="more" aria-label="Rendering"><svg class="icon"><use href="#render"/></svg></button>
                <button class="more" aria-label="Display style"><svg class="icon"><use href="#cube"/></svg></button>
                <button class="more" aria-label="Saved views"><svg class="icon"><use href="#view"/></svg></button>
                <button aria-label="View manager"><svg class="icon"><use href="#camera"/></svg></button>
                <button aria-label="Perspective"><svg class="icon"><use href="#persp"/></svg></button>
                <button class="more" aria-label="Datum display"><svg class="icon"><use href="#datum"/></svg></button>
                <button class="on" aria-label="Annotations"><svg class="icon"><use href="#annot"/></svg></button>
                <button class="on" aria-label="Spin center"><svg class="icon"><use href="#spin"/></svg></button>
                <button aria-label="Simulate"><svg class="icon"><use href="#warn"/></svg></button>
                <button aria-label="Exit"><svg class="icon"><use href="#exit"/></svg></button>

                <div class="mini-menu">
                    <div>
                        <button aria-label="Dimensions"><svg class="icon"><use href="#dim"/></svg></button>
                        <button aria-label="Appearance"><svg class="icon"><use href="#paint"/></svg></button>
                        <button aria-label="References"><svg class="icon"><use href="#chain"/></svg></button>
                        <button aria-label="Material"><svg class="icon"><use href="#mat"/></svg></button>
                        <button aria-label="Pattern"><svg class="icon"><use href="#pattern-s"/></svg></button>
                        <button aria-label="Select"><svg class="icon"><use href="#select"/></svg></button>
                        <i class="caret"></i>
                    </div>
                    <div>
                        <button aria-label="Plane"><svg class="icon"><use href="#plane-s"/></svg></button>
                        <button aria-label="Axis"><svg class="icon"><use href="#axis"/></svg></button>
                        <button aria-label="Point"><svg class="icon"><use href="#point"/></svg></button>
                        <button aria-label="Coordinate system"><svg class="icon"><use href="#csys"/></svg></button>
                        <button aria-label="Offset"><svg class="icon"><use href="#offset"/></svg></button>
                        <button aria-label="Trim"><svg class="icon"><use href="#trim-s"/></svg></button>
                    </div>
                    <div>
                        <button aria-label="Zoom to selected"><svg class="icon"><use href="#selzoom"/></svg></button>
                        <button aria-label="Hide"><svg class="icon"><use href="#eye-off"/></svg></button>
                        <button aria-label="Show only"><svg class="icon"><use href="#eye-box"/></svg></button>
                        <button aria-label="Hide others"><svg class="icon"><use href="#eye-off-box"/></svg></button>
                    </div>
                </div>
            </div>
        </section>
    </main>

    <footer class="status">
        <button class="on" aria-label="Tree"><svg class="icon"><use href="#tree"/></svg></button>
        <button aria-label="Browser"><svg class="icon"><use href="#globe"/></svg></button>
        <button aria-label="Full screen"><svg class="icon"><use href="#screen"/></svg></button>
        <p class="message">Datum planes will not be displayed.</p>
        <div class="selection">
            <button class="find" aria-label="Find"><svg class="icon"><use href="#binoc"/></svg><i class="caret"></i></button>
            <span class="count">1 selected</span>
            <div class="picker">
                <select aria-label="Selection filter"><option>Geometry</option></select>
                <i class="caret"></i>
            </div>
        </div>
    </footer>

    <div class="taskbar">
        <button class="start" aria-label="Start"><svg class="icon"><use href="#win"/></svg></button>
        <label class="os-search"><svg class="icon"><use href="#search"/></svg><input type="text" placeholder="Aramak için buraya yazın"></label>
        <div class="apps">
            <button aria-label="Cortana"><svg class="icon"><use href="#cortana"/></svg></button>
            <button aria-label="Task view"><svg class="icon"><use href="#taskview"/></svg></button>
            <button aria-label="Edge"><svg class="app"><use href="#edge"/></svg></button>
            <button aria-label="Explorer"><svg class="app"><use href="#explorer"/></svg></button>
            <button aria-label="Mail"><svg class="app"><use href="#mail"/></svg></button>
            <button class="current" aria-label="Creo"><svg class="app"><use href="#cube-app"/></svg></button>
            <button class="running" aria-label="Snagit"><svg class="app"><use href="#snagit"/></svg></button>
        </div>
        <div class="tray">
            <svg class="icon small"><use href="#chev"/></svg>
            <svg class="icon small"><use href="#mic"/></svg>
            <svg class="icon small"><use href="#battery"/></svg>
            <svg class="icon small"><use href="#wifi"/></svg>
            <svg class="icon small"><use href="#sound"/></svg>
            <span>TUR</span>
            <time>17:25<br>13.11.2020</time>
            <button class="notif" aria-label="Notifications"><svg class="icon"><use href="#notif"/></svg><b>12</b></button>
        </div>
    </div>
</body>
</html>
```
FILE: styles.css
```
* {
    box-sizing: border-box;
}

body {
    margin: 0;
    height: 100vh;
    display: flex;
    flex-direction: column;
    overflow: hidden;
    font-family: "Open Sans", "Noto Sans", sans-serif;
    font-size: 10px;
    line-height: 14px;
    color: #505455;
    background: #f9fbfb;
}

button, input, select {
    font: inherit;
    color: inherit;
    border: 0;
    padding: 0;
    background: none;
}

button {
    display: flex;
    align-items: center;
    white-space: nowrap;
}

h1, h2, p, ul {
    margin: 0;
    padding: 0;
}

.sprite {
    position: absolute;
    width: 0;
    height: 0;
}

.icon {
    width: 14px;
    height: 14px;
    flex: none;
}

.icon.small {
    width: 12px;
    height: 12px;
}

.icon.large {
    width: 16px;
    height: 16px;
}

.caret {
    width: 0;
    height: 0;
    flex: none;
    border: 3px solid transparent;
    border-top: 4px solid #585c5d;
    border-bottom: 0;
}

.off {
    color: #b0b3b4;
}

.off .icon {
    opacity: 0.8;
}

.off .caret {
    border-top-color: #b0b3b4;
}

/* Title bar */
.titlebar {
    display: grid;
    grid-template-columns: 1fr auto 1fr;
    align-items: center;
    height: 23px;
    background: #d9dfdf;
}

.title-left {
    display: flex;
}

.brand {
    display: flex;
    align-items: center;
    gap: 4px;
    width: 70px;
    height: 20px;
    padding-left: 9px;
    border-right: 1px solid #b9bfc0;
    font: 16px/16px "Lato", sans-serif;
    color: #505557;
}

.brand sup {
    font-size: 6px;
    line-height: 6px;
}

.quick {
    display: flex;
    align-items: center;
    gap: 6px;
    width: 198px;
    height: 20px;
    padding-left: 6px;
    border-right: 1px solid #b9bfc0;
    color: #3c4042;
}

.quick button {
    gap: 4px;
}

.quick .off {
    color: #a3a8a9;
}

.customize {
    padding-left: 5px;
}

.titlebar h1 {
    font-size: 11px;
    font-weight: 400;
    color: #5b6061;
}

.window-buttons {
    display: flex;
    justify-content: flex-end;
    gap: 10px;
    padding-right: 7px;
}

/* Tabs */
.tabs {
    display: flex;
    gap: 1px;
    height: 23px;
    background: #3d4646;
    color: #f4f6f6;
    font-size: 11px;
}

.tabs button {
    padding: 0 18px;
}

.tabs .file {
    width: 50px;
    margin-right: -1px;
    padding: 0;
    justify-content: center;
    background: #55b637;
}

.tabs .active {
    padding: 0 19px;
    background: #fafcfc;
    color: #45952f;
}

.tab-tools {
    display: flex;
    align-items: center;
    gap: 9px;
    margin-left: auto;
    padding-right: 7px;
    font-size: 12px;
}

/* Ribbon */
.ribbon {
    display: grid;
    grid-template-columns: 126px 122px 180px 124px 134px 212px 115px 74px;
    height: 91px;
    background: #fafcfc;
    border-bottom: 1px solid #bdc2c4;
}

.group {
    display: flex;
    flex-direction: column;
    margin: 1px 0 0;
    padding-left: 5px;
    border-right: 1px solid #d0d4d5;
}

.tools {
    display: grid;
    height: 69px;
}

.operations {
    padding-left: 0;
}

.operations .tools {
    grid-template-columns: 62px 1fr;
}

.datum .tools {
    grid-template-columns: 34px 1fr 38px;
}

.shapes .tools {
    grid-template-columns: 40px 1fr;
}

.engineering .tools {
    grid-template-columns: 71px 1fr;
}

.editing .tools {
    grid-template-columns: 41px 52px 60px 1fr;
}

.surfaces .tools {
    grid-template-columns: 51px 1fr;
}

.get-data {
    padding-left: 3px;
}

.shapes {
    padding-left: 3px;
}

.datum, .editing, .surfaces, .intent {
    padding-left: 1px;
}

.big {
    flex-direction: column;
    line-height: 13px;
}

.big svg {
    width: 26px;
    height: 26px;
    margin: 4px 0 9px;
    flex: none;
}

.big .caret {
    margin-top: 4px;
}

.col {
    display: grid;
    grid-template-rows: 22px 22px 23px;
}

.col button {
    gap: 3px;
}

.col .caret {
    margin-left: 3px;
}

.label {
    flex: 1;
    justify-content: center;
    gap: 3px;
}

/* Workspace */
.workspace {
    display: flex;
    flex: 1;
    min-height: 0;
}

.sidebar {
    width: 187px;
    flex: none;
    background: #f9fcfc;
    border-right: 1px solid #dfe4e5;
}

.side-tabs {
    display: grid;
    grid-template-columns: 83px 51px 1fr;
    height: 24px;
    background: #d8dddd;
}

.side-tabs button {
    gap: 4px;
    padding-left: 7px;
}

.side-tabs .active {
    background: #f9fcfc;
}

.cut span {
    mask-image: linear-gradient(90deg, #000 50%, transparent);
}

.side-head {
    display: flex;
    align-items: center;
    height: 24px;
    padding-left: 23px;
}

.side-head h2 {
    width: 65px;
    font-size: 10px;
    line-height: 14px;
    white-space: nowrap;
    color: #222;
}

.side-head button {
    gap: 5px;
    margin-right: 9px;
}

.side-search {
    display: flex;
    align-items: center;
    gap: 5px;
    height: 22px;
    padding-left: 9px;
}

.search-box {
    display: flex;
    width: 121px;
    height: 22px;
    margin-left: -3px;
    padding-right: 3px;
    background: #fff;
    border: 1px solid #aab0b2;
}

.search-box input {
    flex: 1;
    min-width: 0;
}

.search-box button {
    color: #888;
}

.tree {
    margin: 5px 5px 0 7px;
    padding-bottom: 4px;
    border-bottom: 2px solid #58b83c;
    list-style: none;
    font-size: 9px;
}

.tree li {
    display: flex;
    align-items: center;
    gap: 1px;
    height: 16px;
    padding-left: 18px;
}

.tree .root {
    padding-left: 2px;
    gap: 3px;
}

.tree .parent {
    padding-left: 6px;
}

.parent::before {
    content: "";
    margin-right: 5px;
    border: 4px solid transparent;
    border-left: 6px solid #7c8182;
    border-right: 0;
}

.tree span {
    padding: 1px 2px;
}

.tree .selected span {
    background: #a3d6f7;
}

.viewport {
    position: relative;
    flex: 1;
    display: flex;
    justify-content: center;
    align-items: flex-start;
    padding-top: 4px;
    background: linear-gradient(#e5e8eb, #e8ebee);
}

.model {
    position: absolute;
    inset: 0;
    width: 100%;
    height: 100%;
}

.view-tools {
    position: relative;
    display: flex;
    align-items: center;
    width: 305px;
    height: 26px;
    background: #fafcfc;
    border: 1px solid #abb0b3;
}

.view-tools > button {
    position: relative;
    flex: 1;
    justify-content: center;
    height: 20px;
}

.view-tools .on {
    background: #dcdfe0;
    border: 1px solid #b7bbbd;
}

.more::after {
    content: "";
    position: absolute;
    right: 0;
    bottom: 0;
    border-left: 3px solid transparent;
    border-bottom: 3px solid #555;
}

.mini-menu {
    position: absolute;
    top: 25px;
    left: 237px;
    width: 134px;
    background: #fafcfc;
    border: 1px solid #a6abad;
    box-shadow: 2px 2px 2px #9a9fa3;
}

.mini-menu div {
    display: flex;
    align-items: center;
    height: 22px;
}

.mini-menu div + div {
    border-top: 1px solid #e2e5e6;
}

.mini-menu button {
    justify-content: center;
    width: 20px;
}

.mini-menu .caret {
    margin-left: 2px;
}

/* Status bar */
.status {
    display: flex;
    align-items: center;
    height: 29px;
    padding: 0 14px 0 5px;
    background: #f8fbfb;
    border-top: 2px solid #ccd1d3;
}

.status > button {
    justify-content: center;
    width: 18px;
    height: 18px;
    margin-right: 2px;
}

.status .on {
    background: #dcdfdf;
    border: 1px solid #b0b4b5;
}

.message {
    flex: 1;
    margin-left: 4px;
    padding-left: 4px;
    border-left: 1px solid #d0d4d4;
    font-size: 9px;
    line-height: 18px;
}

.message::before {
    content: "";
    display: inline-block;
    width: 4px;
    height: 4px;
    margin-right: 4px;
    border-radius: 50%;
    background: #1c5c77;
    vertical-align: middle;
}

.selection {
    display: flex;
    align-items: center;
    height: 21px;
    padding-left: 33px;
    border-left: 1px solid #c3c8c9;
}

.find {
    justify-content: center;
    gap: 6px;
    width: 35px;
    height: 21px;
    margin-right: 5px;
    border: 1px solid #b5babb;
}

.count {
    width: 76px;
}

.picker {
    position: relative;
    display: flex;
    align-items: center;
    width: 145px;
    height: 19px;
    border: 1px solid #aab0b2;
}

.picker select {
    flex: 1;
    height: 17px;
    padding-left: 5px;
    border-right: 1px solid #b5babb;
    border-radius: 0;
    appearance: none;
}

.picker .caret {
    margin: 0 3px;
}

/* Taskbar */
.taskbar {
    display: flex;
    height: 33px;
    background: linear-gradient(90deg, #d6d4d5 0%, #e6d5d4 27%, #dcd3d3 36%, #dad3d4 55%, #ead7d5 65%, #e4d4d3 80%, #d8d5d5 85%, #d6d5d5 100%);
    color: #333;
}

.start {
    justify-content: center;
    width: 41px;
}

.os-search {
    display: flex;
    align-items: center;
    gap: 9px;
    width: 285px;
    padding-left: 9px;
    background: #fff;
    font-size: 12px;
}

.os-search input {
    flex: 1;
}

.os-search input::placeholder {
    color: #444;
    opacity: 1;
}

.apps {
    display: flex;
    padding-left: 1px;
}

.apps button {
    justify-content: center;
    width: 41px;
}

.app {
    width: 20px;
    height: 20px;
}

.current {
    background: #f0eded;
}

.current, .running {
    border-bottom: 2px solid #0a64ad;
    padding-top: 2px;
}

.tray {
    display: flex;
    align-items: center;
    gap: 8px;
    margin-left: auto;
    padding-right: 19px;
}

.tray time {
    width: 55px;
    line-height: 15px;
    text-align: center;
}

.tray .notif {
    position: relative;
    margin-left: 5px;
}

.notif b {
    position: absolute;
    top: 6px;
    left: 6px;
    width: 14px;
    border: 1px solid #777;
    border-radius: 50%;
    background: #dcdada;
    font-size: 9px;
    line-height: 12px;
    text-align: center;
}
```
